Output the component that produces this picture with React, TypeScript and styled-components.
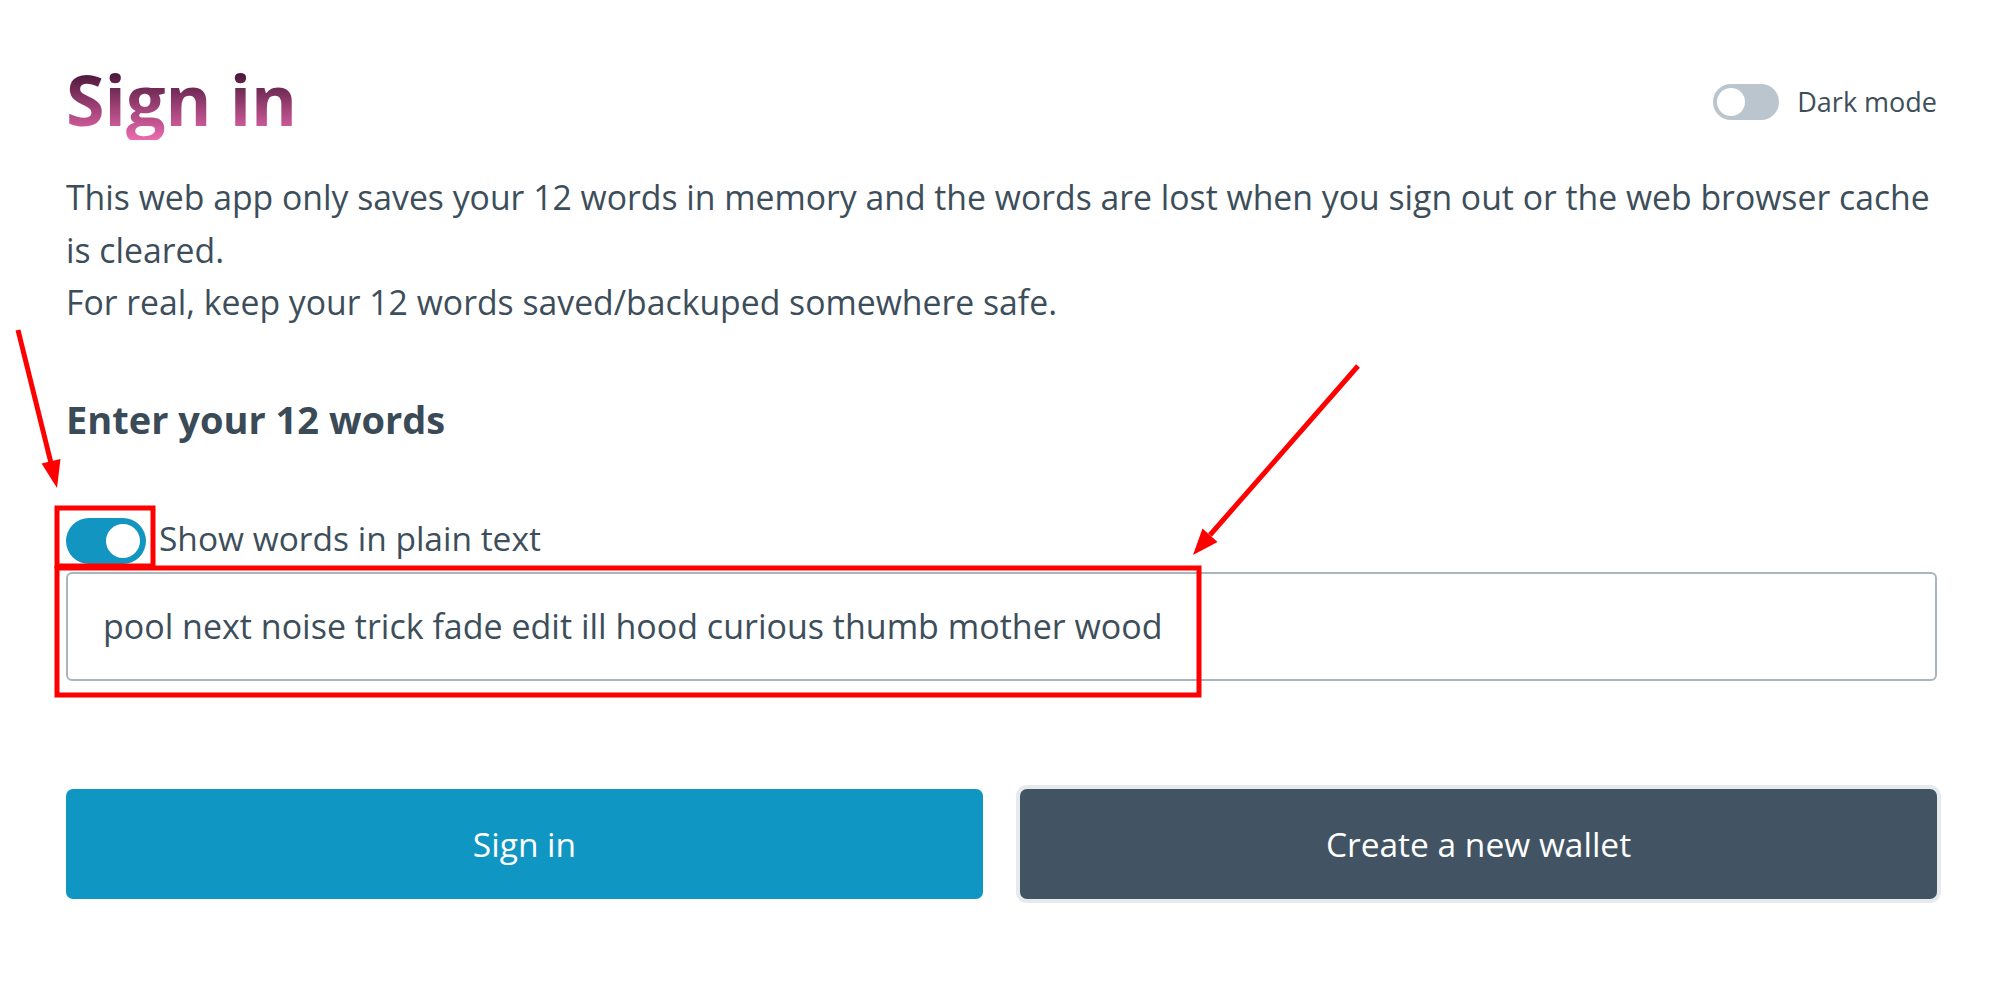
import React, { useState } from "react";
import styled, { createGlobalStyle } from "styled-components";

const GlobalStyle = createGlobalStyle`
  html, body {
    margin: 0;
    padding: 0;
    background: #ffffff;
  }
  body {
    font-family: "Open Sans", "Noto Sans", sans-serif;
    color: #3d4e5b;
  }
  * {
    box-sizing: border-box;
  }
`;

const Page = styled.div`
  position: relative;
  display: flex;
  flex-direction: column;
  min-height: 997px;
  padding: 58px 63px 0 66px;
`;

const Header = styled.header`
  display: flex;
  justify-content: space-between;
  align-items: center;
`;

const Title = styled.h1`
  margin: 0;
  font-size: 70px;
  line-height: 82px;
  font-weight: 700;
  background: linear-gradient(to bottom, #4a1639 18%, #ec6bb0 100%);
  -webkit-background-clip: text;
  background-clip: text;
  color: transparent;
`;

const SwitchLabel = styled.label<{ $gap: number }>`
  display: flex;
  align-items: center;
  gap: ${(p) => p.$gap}px;
  cursor: pointer;
`;

const ThemeLabel = styled(SwitchLabel)`
  padding-top: 6px;
`;

const Switch = styled.span<{ $on: boolean; $w: number; $h: number; $knob: number }>`
  position: relative;
  display: inline-block;
  flex: none;
  width: ${(p) => p.$w}px;
  height: ${(p) => p.$h}px;
  border-radius: ${(p) => p.$h / 2}px;
  background: ${(p) => (p.$on ? "#1295c1" : "#bac5ce")};

  &::after {
    content: "";
    position: absolute;
    top: ${(p) => (p.$h - p.$knob) / 2}px;
    left: ${(p) => (p.$on ? p.$w - p.$knob - (p.$h - p.$knob) / 2 : (p.$h - p.$knob) / 2)}px;
    width: ${(p) => p.$knob}px;
    height: ${(p) => p.$knob}px;
    border-radius: 50%;
    background: #ffffff;
  }
`;

const ThemeText = styled.span`
  font-size: 27px;
  line-height: 36px;
  color: #3d4e5b;
`;

const Intro = styled.div`
  margin-top: 31px;
  font-size: 33.75px;
  line-height: 52.5px;

  p {
    margin: 0;
  }
`;

const SectionTitle = styled.h2`
  margin: 68px 0 0;
  font-size: 38px;
  line-height: 44px;
  font-weight: 700;
  color: #3a4a57;
`;

const ToggleRow = styled(SwitchLabel)`
  margin-top: 77px;
`;

const ToggleText = styled.span`
  font-size: 33.5px;
  line-height: 40px;
  padding-bottom: 6px;
`;

const WordsInput = styled.input`
  display: block;
  width: 100%;
  height: 109px;
  margin-top: 8px;
  padding: 0 35px;
  border: 2px solid #aab4bd;
  border-radius: 6px;
  font-family: inherit;
  font-size: 34px;
  color: #3d4e5b;
  background: #ffffff;
  outline: none;
`;

const Actions = styled.div`
  display: grid;
  grid-template-columns: 1fr 1fr;
  gap: 37px;
  margin-top: 108px;
`;

const Button = styled.button<{ $variant: "primary" | "secondary" }>`
  height: 110px;
  border: none;
  border-radius: 7px;
  font-family: inherit;
  font-size: 33.5px;
  color: #ffffff;
  cursor: pointer;
  background: ${(p) => (p.$variant === "primary" ? "#1096c3" : "#425463")};
  box-shadow: ${(p) => (p.$variant === "secondary" ? "0 0 0 4px #e7eaed" : "none")};
`;

const Annotations = styled.svg`
  position: absolute;
  inset: 0;
  width: 2000px;
  height: 997px;
  pointer-events: none;
`;

export default function App() {
  const [plain, setPlain] = useState(true);
  const words = "pool next noise trick fade edit ill hood curious thumb mother wood";

  return (
    <>
      <GlobalStyle />
      <Page>
        <Header>
          <Title>Sign in</Title>
          <ThemeLabel $gap={18}>
            <Switch $on={false} $w={66} $h={36} $knob={28} />
            <ThemeText>Dark mode</ThemeText>
          </ThemeLabel>
        </Header>

        <Intro>
          <p>
            This web app only saves your 12 words in memory and the words are lost when you sign
            out or the web browser cache is cleared.
          </p>
          <p>For real, keep your 12 words saved/backuped somewhere safe.</p>
        </Intro>

        <SectionTitle>Enter your 12 words</SectionTitle>

        <ToggleRow $gap={13} onClick={() => setPlain(!plain)}>
          <Switch $on={plain} $w={80} $h={46} $knob={34} />
          <ToggleText>Show words in plain text</ToggleText>
        </ToggleRow>

        <WordsInput type={plain ? "text" : "password"} value={words} readOnly />

        <Actions>
          <Button $variant="primary">Sign in</Button>
          <Button $variant="secondary">Create a new wallet</Button>
        </Actions>

        {/* red markup drawn over the screenshot */}
        <Annotations viewBox="0 0 2000 997">
          <g fill="none" stroke="#ff0000" strokeWidth="5">
            <rect x="57" y="508" width="96" height="58" />
            <rect x="57" y="568" width="1142" height="127" />
            <line x1="18" y1="330" x2="51" y2="463" />
            <line x1="1358" y1="366" x2="1210" y2="535" />
          </g>
          <g fill="#ff0000">
            <polygon points="57,488 41.6,463.5 60.5,459" />
            <polygon points="1193,555 1202.5,528.5 1217.5,542" />
          </g>
        </Annotations>
      </Page>
    </>
  );
}
